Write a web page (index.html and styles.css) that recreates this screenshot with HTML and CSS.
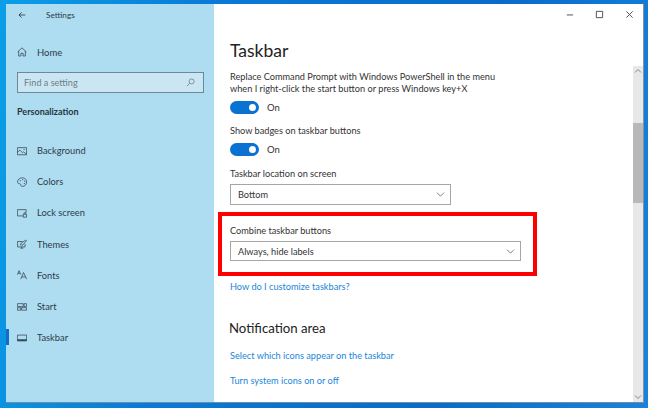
FILE: index.html
```html
<!DOCTYPE html>
<html lang="en">
<head>
<meta charset="utf-8">
<title>Settings - Taskbar</title>
<link rel="stylesheet" href="styles.css">
</head>
<body>
<div class="desktop">
  <div class="window">
    <aside class="sidebar">
      <div class="titlebar">
        <svg class="back" viewBox="0 0 12 12"><path d="M11 6H1.500M5.500 2 1.500 6l4 4"/></svg>
        <span class="app-title">Settings</span>
      </div>
      <div class="home">
        <svg class="icon" viewBox="0 0 12 12"><path d="M.7 6 6 1l5.300 5M2 5v5.800h2.700V7.500h2.600v3.300H10V5"/></svg>
        <span>Home</span>
      </div>
      <div class="search">
        <span>Find a setting</span>
        <svg class="search-icon" viewBox="0 0 10 10"><circle cx="6.200" cy="3.800" r="2.800"/><path d="M4.200 5.800 1 9"/></svg>
      </div>
      <div class="section-title">Personalization</div>
      <nav class="nav">
        <div class="nav-item">
          <svg class="icon" viewBox="0 0 12 12"><path d="M.5 2h11v8.500H.5zM.5 7.500 3.500 5l3 3 1.500-1 3.500 3"/><circle cx="8.500" cy="4.200" r=".7"/></svg>
          <span>Background</span>
        </div>
        <div class="nav-item">
          <svg class="icon" viewBox="0 0 12 12"><path d="M6.500 1C3 1 .7 3.300.7 6c0 1.500 1 2 2 2 1.200 0 1.800.5 1.800 1.500 0 1 .7 1.800 2 1.800 2.800 0 5-2.300 5-5.300C11.500 3 9.500 1 6.500 1z"/><circle cx="4" cy="4.500" r=".7"/><circle cx="6.800" cy="3.300" r=".7"/><circle cx="9.300" cy="5" r=".7"/><circle cx="8.800" cy="7.800" r=".7"/></svg>
          <span>Colors</span>
        </div>
        <div class="nav-item">
          <svg class="icon" viewBox="0 0 12 12"><path d="M7 9.500H.5V2h10.500v3.500M7.500 7.500h4v3.500h-4zM8.500 7.500V6.300a1 1 0 0 1 2 0v1.200"/></svg>
          <span>Lock screen</span>
        </div>
        <div class="nav-item">
          <svg class="icon" viewBox="0 0 12 12"><path d="M6.500 3H.7v6.500h9V6M4 11h3.500M5.700 9.500V11M4 7l1-2 5.500-3.800.8.800L7 7.300z"/></svg>
          <span>Themes</span>
        </div>
        <div class="nav-item">
          <svg class="icon" viewBox="0 0 12 12"><path d="M.5 5.500 2.500 .8l2 4.700M1.200 4h2.600M4.500 11 7.800 3l3.700 8M5.800 8.300h4.500"/></svg>
          <span>Fonts</span>
        </div>
        <div class="nav-item">
          <svg class="icon" viewBox="0 0 12 12"><path d="M.5 2h7v3.500h-7zM8.500 2h3v3.500h-3zM.5 6.800h4v3h-4zM5.500 6.800h6v3h-6z"/></svg>
          <span>Start</span>
        </div>
        <div class="nav-item is-active">
          <svg class="icon" viewBox="0 0 12 12"><path d="M.5 2.500h11v7h-11z"/><path class="fill" d="M.5 7.500h11v2h-11z"/></svg>
          <span>Taskbar</span>
        </div>
      </nav>
    </aside>
    <main class="main">
      <div class="window-controls">
        <svg viewBox="0 0 10 10"><path d="M2 5.500h7"/></svg>
        <svg viewBox="0 0 10 10"><path d="M1.500 1.500h7v7h-7z"/></svg>
        <svg viewBox="0 0 10 10"><path d="M1.500 1.500l7 7M8.500 1.500l-7 7"/></svg>
      </div>
      <div class="body">
        <div class="content">
          <h1>Taskbar</h1>
          <p class="label first-label">Replace Command Prompt with Windows PowerShell in the menu<br>when I right-click the start button or press Windows key+X</p>
          <div class="toggle-row"><span class="toggle"></span><span>On</span></div>
          <p class="label badges">Show badges on taskbar buttons</p>
          <div class="toggle-row"><span class="toggle"></span><span>On</span></div>
          <p class="label location">Taskbar location on screen</p>
          <div class="select select-short">
            <span>Bottom</span>
            <svg viewBox="0 0 10 6"><path d="M.8 .8 5 5l4.200-4.200"/></svg>
          </div>
          <p class="label combine">Combine taskbar buttons</p>
          <div class="select select-long">
            <span>Always, hide labels</span>
            <svg viewBox="0 0 10 6"><path d="M.8 .8 5 5l4.200-4.200"/></svg>
          </div>
          <a class="link first-link">How do I customize taskbars?</a>
          <h2>Notification area</h2>
          <a class="link">Select which icons appear on the taskbar</a>
          <a class="link last-link">Turn system icons on or off</a>
        </div>
        <div class="scrollbar">
          <svg class="arrow" viewBox="0 0 10 10"><path d="M2 6.500 5 3.500l3 3"/></svg>
          <div class="track"><div class="thumb"></div></div>
          <svg class="arrow" viewBox="0 0 10 10"><path d="M2 3.500 5 6.500l3-3"/></svg>
        </div>
      </div>
      <div class="highlight"></div>
    </main>
  </div>
</div>
</body>
</html>
```
FILE: styles.css
```css
* { box-sizing: border-box; }
html, body { margin: 0; height: 100%; }
body { font-family: "Lato", "Liberation Sans", sans-serif; font-size: 9.200px; color: #333; overflow: hidden; }

.desktop {
  width: 648px;
  height: 408px;
  padding: 4px 4px 5px 6px;
  display: flex;
  background: linear-gradient(100deg, #0a9fe8 0%, #0a7ad6 30%, #0a6cc8 70%, #1a82dc 100%);
}
.window {
  flex: 1;
  display: flex;
  background: #fff;
  border-bottom: 1px solid #6f8ea0;
  border-right: 1px solid #7b97a8;
}

.sidebar { width: 208px; background: #aedcf1; display: flex; flex-direction: column; color: #2c3d48; }
.titlebar { height: 21px; display: flex; align-items: center; }
.back { width: 8px; height: 8px; margin-left: 12px; fill: none; stroke: #222; stroke-width: 1.100; }
.app-title { margin-left: 20px; font-size: 8.200px; }
.home { display: flex; align-items: center; gap: 10px; height: 14px; margin-top: 20px; padding-left: 11px; font-size: 9.500px; }
.icon { width: 10px; height: 10px; flex: none; fill: none; stroke: #33444f; stroke-width: .9; }
.icon circle { fill: #33444f; stroke: none; }
.icon .fill { fill: #33444f; stroke: none; }
.search {
  margin: 13px 0 0 11px;
  width: 187px;
  height: 21px;
  border: 1.500px solid #6d8897;
  background: #cbe6f3;
  display: flex;
  align-items: center;
  justify-content: space-between;
  padding: 0 8px 0 6px;
  color: #6c7e88;
  font-size: 9.100px;
}
.search-icon { width: 9px; height: 9px; fill: none; stroke: #6c7e88; stroke-width: .9; }
.section-title { margin: 12px 0 0 11px; font-weight: 700; font-size: 9px; line-height: 14px; color: #27343c; }
.nav { margin-top: 16px; display: flex; flex-direction: column; }
.nav-item { height: 31.200px; display: flex; align-items: center; gap: 10px; padding-left: 11px; position: relative; font-size: 9.300px; }
.nav-item.is-active::before { content: ""; position: absolute; left: 0; top: 7px; width: 3px; height: 16px; background: #0f6fc8; }

.main { flex: 1; display: flex; flex-direction: column; position: relative; min-width: 0; }
.window-controls { height: 21px; flex: none; display: flex; justify-content: flex-end; align-items: center; gap: 21px; padding: 0 9px 0 0; }
.window-controls svg { width: 9px; height: 9px; fill: none; stroke: #444; stroke-width: 1; }
.body { flex: 1; display: flex; min-height: 0; }
.content { flex: 1; padding-left: 16px; min-width: 0; }
h1 { margin: 14px 0 0; font-size: 17.500px; font-weight: 400; line-height: 24px; color: #222; }
h2 { margin: 26px 0 0 -1px; font-size: 13.200px; font-weight: 400; line-height: 18px; color: #222; }
.label { margin: 0; font-size: 9.200px; line-height: 12px; }
.first-label { margin-top: 8px; }
.badges { margin-top: 11px; }
.location { margin-top: 12px; }
.combine { margin-top: 20px; }
.toggle-row { display: flex; align-items: center; gap: 8px; margin-top: 6px; height: 13px; font-size: 9.500px; }
.toggle { width: 29px; height: 13px; border-radius: 7px; background: #0a72d0; position: relative; flex: none; }
.toggle::after { content: ""; position: absolute; right: 3px; top: 3px; width: 7px; height: 7px; border-radius: 50%; background: #fff; }
.select {
  height: 21px;
  margin-top: 4px;
  border: 1.500px solid #a6a6a6;
  display: flex;
  align-items: center;
  justify-content: space-between;
  padding: 0 5px 0 7px;
  font-size: 9.200px;
}
.select svg { width: 9px; height: 5px; fill: none; stroke: #666; stroke-width: 1; }
.select-short { width: 221px; }
.select-long { width: 291px; height: 20px; }
.link { display: block; color: #1a86d9; font-size: 9.200px; line-height: 12px; }
.first-link { margin-top: 20px; }
h2 + .link { margin-top: 13px; }
.last-link { margin-top: 13px; }

.scrollbar { width: 10px; flex: none; margin-top: 41px; background: #e8e8e8; display: flex; flex-direction: column; }
.arrow { width: 10px; height: 10px; flex: none; fill: none; stroke: #888; stroke-width: 1; }
.track { flex: 1; }
.thumb { height: 80px; margin-top: 47px; background: #b8b8b8; }

.highlight { position: absolute; left: 4px; top: 208px; width: 319px; height: 64px; border: 4px solid #f00; }
```
